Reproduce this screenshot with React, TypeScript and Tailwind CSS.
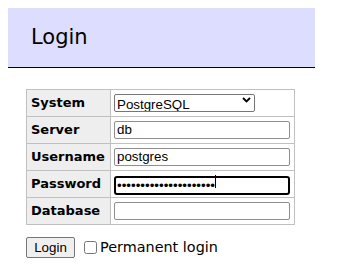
import React from "react";

const verdana = { fontFamily: '"DejaVu Sans", Verdana, sans-serif' };
const arial = { fontFamily: '"Liberation Sans", Arial, sans-serif' };

function Label({ children }: { children: React.ReactNode }) {
  return (
    <div
      className="bg-[#eeeeee] flex items-center pl-[4px] text-[13px] font-bold text-black"
      style={verdana}
    >
      {children}
    </div>
  );
}

function Cell({ children }: { children: React.ReactNode }) {
  return <div className="bg-white flex items-center pl-[3px]">{children}</div>;
}

function TextInput({ value }: { value: string }) {
  return (
    <input
      type="text"
      readOnly
      value={value}
      className="w-[176px] h-[18px] border border-[#8f8f8f] rounded-[2px] px-[2px] text-[13.33px] text-black bg-white outline-none"
      style={arial}
    />
  );
}

export default function App() {
  return (
    <div className="w-[339px] h-[277px] bg-white pt-2 pl-2 overflow-hidden">
      <div
        className="w-[307px] h-[60px] bg-[#ddddff] border-b border-black flex items-center pl-[23px] text-[21px] text-black"
        style={verdana}
      >
        Login
      </div>

      <div className="ml-[18px] mt-[21px]">
        <div className="grid grid-cols-[83px_183px] grid-rows-[26px_26px_26px_26px_26px] gap-px p-px bg-[#c0c0c0] w-[269px]">
          <Label>System</Label>
          <Cell>
            <div className="relative">
              <select
                className="appearance-none w-[141px] h-[18px] border border-[#767676] rounded-[2px] pl-[2px] text-[13.33px] text-black bg-white outline-none"
                style={arial}
                defaultValue="pgsql"
              >
                <option value="pgsql">PostgreSQL</option>
              </select>
              <svg
                className="absolute right-[4px] top-[6px] pointer-events-none"
                width="9"
                height="6"
                viewBox="0 0 9 6"
              >
                <path d="M1 1 L4.5 4.5 L8 1" stroke="#000" strokeWidth="1.8" fill="none" />
              </svg>
            </div>
          </Cell>

          <Label>Server</Label>
          <Cell>
            <TextInput value="db" />
          </Cell>

          <Label>Username</Label>
          <Cell>
            <TextInput value="postgres" />
          </Cell>

          <Label>Password</Label>
          <Cell>
            <div className="relative">
              <input
                type="password"
                readOnly
                value="xxxxxxxxxxxxxxxxxxxxx"
                className="w-[176px] h-[19px] border-2 border-black rounded-[3px] px-[1px] text-[13.33px] text-black bg-white outline-none"
                style={arial}
              />
              <span className="absolute left-[101px] top-[3px] w-px h-[13px] bg-black" />
            </div>
          </Cell>

          <Label>Database</Label>
          <Cell>
            <TextInput value="" />
          </Cell>
        </div>

        <div className="flex items-center mt-[12px]">
          <button
            className="h-[21px] w-[49px] bg-[#efefef] border border-[#767676] rounded-[2px] text-[13.33px] text-black"
            style={arial}
          >
            Login
          </button>
          <label className="flex items-center ml-[9px]">
            <input type="checkbox" className="m-0 w-[13px] h-[13px]" />
            <span className="ml-[3px] text-[14.4px] text-black" style={verdana}>
              Permanent login
            </span>
          </label>
        </div>
      </div>
    </div>
  );
}
